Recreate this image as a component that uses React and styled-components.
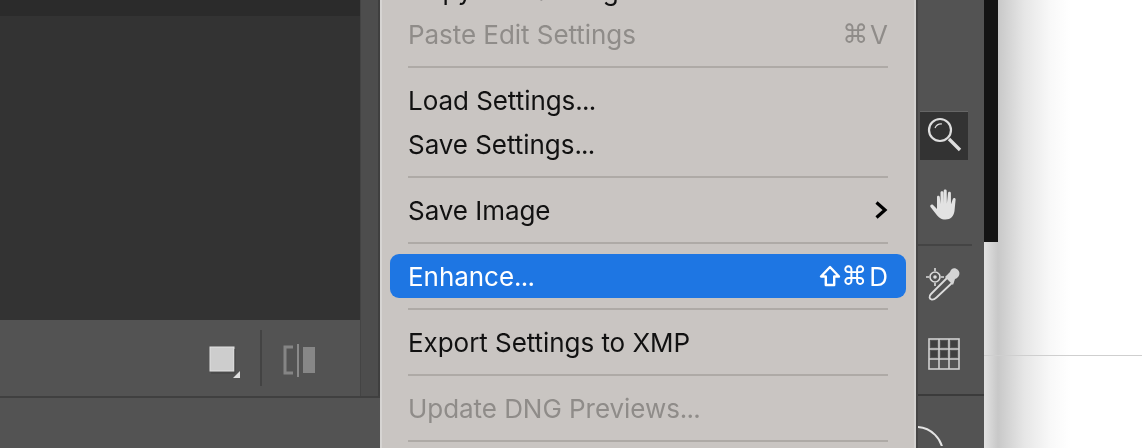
import React from "react";
import styled, { createGlobalStyle } from "styled-components";

const GlobalStyle = createGlobalStyle`
  html, body {
    margin: 0;
    padding: 0;
    background: #fff;
  }
`;

const Page = styled.div`
  display: flex;
  width: 1142px;
  height: 448px;
  overflow: hidden;
  font-family: Inter, "Liberation Sans", sans-serif;
  filter: blur(0.4px);
`;

const LeftColumn = styled.div`
  width: 380px;
  flex: none;
  display: flex;
  flex-direction: column;
  background: #535353;
`;

const Workspace = styled.div`
  display: flex;
  height: 396px;
  flex: none;
  border-bottom: 2px solid #404040;
`;

const Viewer = styled.div`
  width: 360px;
  flex: none;
  display: flex;
  flex-direction: column;
  border-right: 1px solid #444;
`;

const ViewerTop = styled.div`
  height: 16px;
  flex: none;
  background: #2b2b2b;
`;

const ViewerBody = styled.div`
  flex: 1;
  background: #333;
`;

const ViewerBar = styled.div`
  height: 76px;
  flex: none;
  display: flex;
  align-items: center;
  justify-content: flex-end;
  padding-right: 44px;
  background: #535353;
`;

const ViewMode = styled.svg`
  display: block;
  margin-top: ${(p) => p.$drop}px;
`;

const BarDivider = styled.div`
  width: 2px;
  height: 56px;
  margin: 0 20px 0 19px;
  background: #434343;
`;

const SideGutter = styled.div`
  flex: 1;
  background: #4d4d4d;
  border-right: 2px solid #3f3f3f;
`;

const Menu = styled.div`
  width: 536px;
  flex: none;
  box-sizing: border-box;
  height: 490px;
  margin-top: -32px;
  padding: 0 8px;
  background: #c9c5c2;
  border-left: 2px solid #d6d4d2;
  border-right: 2px solid #d4d2d0;
`;

const Item = styled.div`
  height: 44px;
  display: flex;
  align-items: center;
  justify-content: space-between;
  padding: 0 18px;
  font-size: 26px;
  letter-spacing: -0.05px;
  border-radius: 9px;
  color: ${(p) => (p.$active ? "#fff" : p.$disabled ? "#8f8c89" : "#111")};
  background: ${(p) => (p.$active ? "#1e76e3" : "transparent")};
`;

const Dots = styled.span`
  letter-spacing: -0.8px;
`;

const Shortcut = styled.span`
  display: flex;
  align-items: center;
  gap: 2px;
  font-size: 26px;
`;

const Glyph = styled.span`
  font-family: "DejaVu Sans", sans-serif;
  font-size: 26px;
`;

const ShiftMark = styled.svg`
  display: block;
  margin-right: -2px;
`;

const Separator = styled.div`
  height: 22px;
  display: flex;
  align-items: center;
  padding: 0 18px;
  &::after {
    content: "";
    flex: 1;
    height: 2px;
    background: #aeaaa6;
  }
`;

const Rail = styled.div`
  width: 68px;
  flex: none;
  display: flex;
  flex-direction: column;
  background: #535353;
  border-left: 2px solid #454545;
  box-sizing: border-box;
`;

const ToolStack = styled.div`
  height: 396px;
  flex: none;
  box-sizing: border-box;
  padding-top: 111px;
  border-bottom: 2px solid #3b3b3b;
  display: flex;
  flex-direction: column;
  align-items: flex-start;
`;

const Tool = styled.div`
  width: 48px;
  height: ${(p) => p.$h}px;
  margin-left: 2px;
  flex: none;
  display: flex;
  align-items: center;
  justify-content: center;
  padding-top: ${(p) => p.$top || 0}px;
  box-sizing: border-box;
  background: ${(p) => (p.$selected ? "#333" : "transparent")};
  border-top: ${(p) => (p.$selected ? "1px solid #666" : "none")};
`;

const RailDivider = styled.div`
  width: 54px;
  height: 2px;
  flex: none;
  background: #444;
`;

const RailFoot = styled.div`
  padding-top: 30px;
  line-height: 0;
`;

const Canvas = styled.div`
  flex: 1;
  display: flex;
  flex-direction: column;
  align-items: flex-start;
  background: linear-gradient(90deg, #e2e2e2 0, #c8c8c8 14px, #e6e6e6 40px, #f8f8f8 66px, #fff 86px);
`;

const Backdrop = styled.div`
  width: 14px;
  height: 242px;
  flex: none;
  background: #141414;
`;

const Hairline = styled.div`
  width: 100%;
  height: 1px;
  margin-top: 113px;
  background: #cfcfcf;
`;

const SingleView = () => (
  <ViewMode $drop={7} width="32" height="32" viewBox="0 0 32 32">
    <rect x="1" y="1" width="24" height="24" fill="#cdcdcd" stroke="#e2e2e2" />
    <path d="M26 3v24H2" fill="none" stroke="#454545" />
    <path d="M31 25v7h-7z" fill="#e0e0e0" />
  </ViewMode>
);

const CompareView = () => (
  <ViewMode $drop={4} width="34" height="34" viewBox="0 0 34 34">
    <path d="M11 4H3v26h8" fill="none" stroke="#858585" strokeWidth="3" />
    <path d="M16 1v33" stroke="#8a8a8a" strokeWidth="2" />
    <rect x="21" y="4" width="12" height="26" fill="#878787" />
  </ViewMode>
);

const ZoomIcon = () => (
  <svg width="36" height="38" viewBox="0 0 36 38" fill="none">
    <circle cx="14" cy="13" r="11" stroke="#dedede" strokeWidth="2.2" />
    <path d="M9 11a7 7 0 0 1 7-4" stroke="#dedede" strokeWidth="1.2" />
    <path d="M23 22l11 11" stroke="#dedede" strokeWidth="3.4" />
  </svg>
);

const HandIcon = () => (
  <svg width="30" height="32" viewBox="0 0 30 32">
    <path
      fill="#e2e2e2"
      d="M8 8c0-1.800 2.600-1.800 2.800 0l.7 7V3.500c0-1.800 2.800-1.800 2.900 0l.3 11V2c0-1.900 3-1.900 3 0l.2 12.500L19 4c.2-1.800 2.900-1.600 2.900.2l.1 11 1.800-5.200c.6-1.700 3.200-1 2.800.8L25.500 22c-.8 5-3.700 8.500-9 8.500-4.500 0-7-2-9.500-5.500L1.500 18c-1.100-1.600 1.200-3.300 2.600-1.900L8 20z"
    />
  </svg>
);

const TargetDropperIcon = () => (
  <svg width="40" height="36" viewBox="0 0 40 36" fill="none" stroke="#dcdcdc">
    <circle cx="11" cy="12" r="5" strokeWidth="1.600" />
    <circle cx="11" cy="12" r="1.800" fill="#dcdcdc" stroke="none" />
    <path d="M11 3v3M11 18v3M2 12h3M17 12h3" strokeWidth="1.600" />
    <path d="M23 13L7 29c-2.500 2.500-1.500 5 .5 5.500 1.800.4 3-.2 5-2L29 17" strokeWidth="1.800" />
    <path d="M21 12l8 8 2-6c4-1 6-6 3-9-3-3-7-2-8 2z" fill="#d4d4d4" stroke="none" />
  </svg>
);

const GridIcon = () => (
  <svg width="32" height="32" viewBox="0 0 32 32">
    <rect x="1" y="1" width="30" height="30" fill="none" stroke="#cfcfcf" strokeWidth="1.600" />
    <path d="M11 1v30M21 1v30M1 11h30M1 21h30" stroke="#cfcfcf" strokeWidth="1.600" />
    <path d="M3 3h6v6H3zM13 3h6v6h-6zM23 3h6v6h-6zM3 13h6v6H3zM13 13h6v6h-6zM23 13h6v6h-6z" fill="#3f3f3f" />
  </svg>
);

const Chevron = () => (
  <svg width="14" height="20" viewBox="0 0 14 20" fill="none">
    <path d="M2.500 2.500L11 10l-8.500 7.500" stroke="#000" strokeWidth="3.200" />
  </svg>
);

const ShiftIcon = () => (
  <ShiftMark width="22" height="22" viewBox="0 0 22 22" fill="none">
    <path d="M11 2L2 11.500h4.800V20h8.400v-8.500H20z" stroke="#fff" strokeWidth="2.400" strokeLinejoin="round" />
  </ShiftMark>
);

const App = () => {
  return (
    <Page>
      <GlobalStyle />
      <LeftColumn>
        <Workspace>
          <Viewer>
            <ViewerTop />
            <ViewerBody />
            <ViewerBar>
              <SingleView />
              <BarDivider />
              <CompareView />
            </ViewerBar>
          </Viewer>
          <SideGutter />
        </Workspace>
      </LeftColumn>
      <Menu>
        <Item>
          Copy Edit Settings
          <Shortcut><Glyph>⌘</Glyph>C</Shortcut>
        </Item>
        <Item $disabled>
          Paste Edit Settings
          <Shortcut><Glyph>⌘</Glyph>V</Shortcut>
        </Item>
        <Separator />
        <Item><span>Load Settings<Dots>...</Dots></span></Item>
        <Item><span>Save Settings<Dots>...</Dots></span></Item>
        <Separator />
        <Item>
          Save Image
          <Chevron />
        </Item>
        <Separator />
        <Item $active>
          <span>Enhance<Dots>...</Dots></span>
          <Shortcut><ShiftIcon /><Glyph>⌘</Glyph>D</Shortcut>
        </Item>
        <Separator />
        <Item>Export Settings to XMP</Item>
        <Separator />
        <Item $disabled><span>Update DNG Previews<Dots>...</Dots></span></Item>
        <Separator />
      </Menu>
      <Rail>
        <ToolStack>
          <Tool $h={49} $selected>
            <ZoomIcon />
          </Tool>
          <Tool $h={84} $top={6}>
            <HandIcon />
          </Tool>
          <RailDivider />
          <Tool $h={74}>
            <TargetDropperIcon />
          </Tool>
          <Tool $h={68}>
            <GridIcon />
          </Tool>
        </ToolStack>
        <RailFoot>
          <svg width="30" height="20" viewBox="0 0 30 20" fill="none">
            <circle cx="-2" cy="28" r="27" stroke="#e4e4e4" strokeWidth="2" />
          </svg>
        </RailFoot>
      </Rail>
      <Canvas>
        <Backdrop />
        <Hairline />
      </Canvas>
    </Page>
  );
};

export default App;
